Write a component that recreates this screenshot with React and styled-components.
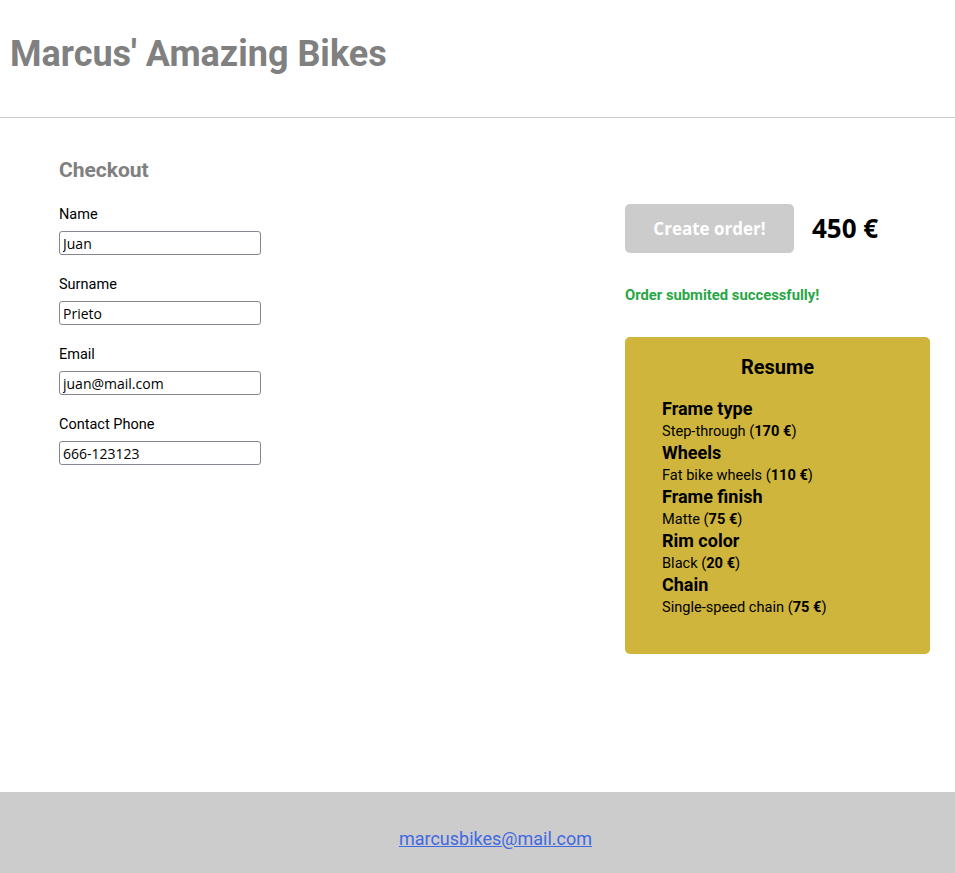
import React from 'react';
import styled, { createGlobalStyle } from 'styled-components';

const fields = [
  { label: 'Name', value: 'Juan' },
  { label: 'Surname', value: 'Prieto' },
  { label: 'Email', value: 'juan@mail.com' },
  { label: 'Contact Phone', value: '666-123123' },
];

const parts = [
  { name: 'Frame type', choice: 'Step-through', price: 170 },
  { name: 'Wheels', choice: 'Fat bike wheels', price: 110 },
  { name: 'Frame finish', choice: 'Matte', price: 75 },
  { name: 'Rim color', choice: 'Black', price: 20 },
  { name: 'Chain', choice: 'Single-speed chain', price: 75 },
];

const App = () => {
  return (
    <Page>
      <GlobalStyle />
      <Header>
        <Title>Marcus' Amazing Bikes</Title>
      </Header>

      <Main>
        <Form>
          <Heading>Checkout</Heading>
          {fields.map(f => (
            <Field key={f.label}>
              <Label>{f.label}</Label>
              <Input defaultValue={f.value} />
            </Field>
          ))}
        </Form>

        <Side>
          <Actions>
            <Button>Create order!</Button>
            <Total>450 €</Total>
          </Actions>
          <Success>Order submited successfully!</Success>

          <Resume>
            <ResumeTitle>Resume</ResumeTitle>
            <List>
              {parts.map(p => (
                <Item key={p.name}>
                  <ItemName>{p.name}</ItemName>
                  <ItemValue>{p.choice} (<b>{p.price} €</b>)</ItemValue>
                </Item>
              ))}
            </List>
          </Resume>
        </Side>
      </Main>

      <Footer>
        <Mail href="#">marcusbikes@mail.com</Mail>
      </Footer>
    </Page>
  );
};

export default App;

const GlobalStyle = createGlobalStyle`
  body {
    margin: 0;
    font-family: Roboto, "Liberation Sans", sans-serif;
    color: #000;
    background: #fff;
  }
`;

const Page = styled.div`
  min-height: 100vh;
  display: flex;
  flex-direction: column;
`;

const Header = styled.header`
  height: 117px;
  display: flex;
  align-items: center;
  padding: 0 10px;
  border-bottom: 1px solid #cccccc;
  box-sizing: content-box;
`;

const Title = styled.h1`
  margin: 0 0 10px;
  font-size: 36px;
  font-weight: 700;
  color: #808080;
`;

const Main = styled.main`
  flex: 1;
  display: grid;
  grid-template-columns: 1fr 305px;
  align-items: start;
  padding: 40px 25px 0 59px;
`;

const Form = styled.form`
  display: flex;
  flex-direction: column;
`;

const Heading = styled.h2`
  margin: 0 0 24px;
  font-size: 21px;
  line-height: 24px;
  font-weight: 700;
  color: #808080;
`;

const Field = styled.div`
  display: flex;
  flex-direction: column;
  align-items: flex-start;
  margin-bottom: 21px;
`;

const Label = styled.label`
  font-size: 14.5px;
  line-height: 17px;
  margin-bottom: 8px;
`;

const Input = styled.input`
  box-sizing: border-box;
  width: 202px;
  height: 24px;
  padding: 0 3px;
  border: 1px solid #86858f;
  border-radius: 3px;
  font-family: "Open Sans", "DejaVu Sans", sans-serif;
  font-size: 14px;
  color: #000;
`;

const Side = styled.div`
  display: flex;
  flex-direction: column;
  padding-top: 46px;
`;

const Actions = styled.div`
  display: flex;
  align-items: center;
  gap: 18px;
`;

const Button = styled.button`
  width: 169px;
  height: 49px;
  border: none;
  border-radius: 5px;
  background: #cccccc;
  color: #fff;
  font-family: "Open Sans", sans-serif;
  font-size: 17px;
  font-weight: 700;
`;

const Total = styled.span`
  font-family: "Open Sans", sans-serif;
  font-size: 26px;
  font-weight: 700;
  margin-top: -2px;
`;

const Success = styled.p`
  margin: 34px 0 33px;
  font-size: 14.8px;
  line-height: 17px;
  font-weight: 700;
  color: #28a745;
`;

const Resume = styled.section`
  background: #cfb53b;
  border-radius: 5px;
  padding: 18px 20px 36px 37px;
`;

const ResumeTitle = styled.h3`
  margin: 0 0 19px -17px;
  text-align: center;
  font-size: 20px;
  line-height: 24px;
  font-weight: 700;
`;

const List = styled.div`
  display: flex;
  flex-direction: column;
`;

const Item = styled.div`
  display: flex;
  flex-direction: column;
`;

const ItemName = styled.span`
  font-size: 18px;
  line-height: 21px;
  font-weight: 700;
`;

const ItemValue = styled.span`
  margin-top: 2px;
  font-size: 14.6px;
  line-height: 21px;
`;

const Footer = styled.footer`
  height: 81px;
  background: #cccccc;
  display: flex;
  align-items: center;
  justify-content: center;
  padding: 12px 0 0 36px;
  box-sizing: border-box;
`;

const Mail = styled.a`
  font-size: 18px;
  color: #4169e1;
`;
